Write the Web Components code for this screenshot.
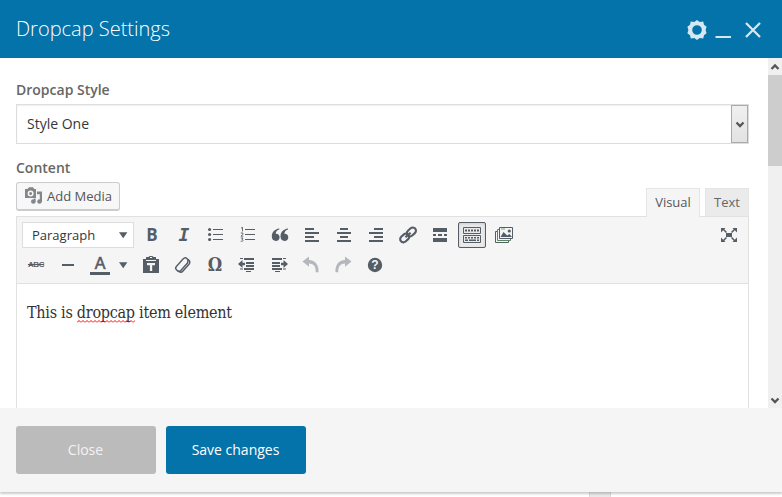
<!DOCTYPE html>
<html lang="en">
<head>
<meta charset="utf-8">
<title>Dropcap Settings</title>
<style>
html,body{margin:0;height:100%;overflow:hidden}
body{font-family:"Open Sans","Liberation Sans",sans-serif;background:#fff}
</style>
</head>
<body>
<settings-dialog></settings-dialog>
<script>
const define = (name, html) => customElements.define(name, class extends HTMLElement {
  constructor() {
    super();
    this.attachShadow({ mode: 'open' }).innerHTML = html;
  }
});

// Icons are drawn on a 20 x 20 grid.
const ICONS = {
  ul: '<g fill="currentColor"><circle cx="3.600" cy="4.500" r="1.600"/><circle cx="3.600" cy="9.500" r="1.600"/><circle cx="3.600" cy="14.500" r="1.600"/><path d="M7 4h10v1H7zM7 9h10v1H7zM7 14h10v1H7z"/></g>',
  ol: '<g fill="currentColor"><path d="M7 4h10v1H7zM7 9h10v1H7zM7 14h10v1H7z"/><path d="M3 3.2L4.5 2.300v4.200M2.800 8h2.100v1.200L3 11.2h2.300M2.800 13h2.200l-1 1.5c1.700.2 1.500 2.100-1.300 1.700" fill="none" stroke="currentColor" stroke-width=".9"/></g>',
  quote: '<g fill="currentColor"><path d="M9.300 4.600C7.200 5 5.700 6.800 5.700 8.800c2-.3 3.900 1 3.900 3.400 0 2.200-1.600 3.800-3.700 3.800-2.600 0-4.100-1.900-4.100-4.700C1.800 7.300 4.600 4.200 9.300 3.600z"/><path transform="translate(8.700)" d="M9.300 4.600C7.200 5 5.700 6.800 5.700 8.800c2-.3 3.900 1 3.900 3.400 0 2.200-1.600 3.800-3.700 3.800-2.600 0-4.100-1.900-4.100-4.700C1.800 7.300 4.600 4.200 9.300 3.600z"/></g>',
  left: '<path fill="currentColor" d="M3 3h9v2H3zM3 7h14v2H3zM3 11h9v2H3zM3 15h14v2H3z"/>',
  center: '<path fill="currentColor" d="M6 3h8v2H6zM3 7h14v2H3zM6 11h8v2H6zM3 15h14v2H3z"/>',
  right: '<path fill="currentColor" d="M8 3h9v2H8zM3 7h14v2H3zM8 11h9v2H8zM3 15h14v2H3z"/>',
  link: '<g transform="rotate(-42 10 10)" fill="none" stroke="currentColor" stroke-width="2.100"><rect x=".6" y="6.800" width="10" height="6.400" rx="3.200"/><rect x="9.600" y="6.800" width="10" height="6.400" rx="3.200"/><path d="M6.500 10h7"/></g>',
  more: '<path fill="currentColor" d="M3 3h14v4H3zM3 9h3v2H3zM8 9h4v2H8zM14 9h3v2h-3zM3 13h14v4H3z"/>',
  keys: '<g fill="none" stroke="currentColor"><path d="M1.500 2.500h17v6h-17zM1.500 10.500h17v7h-17z"/><path d="M3 5.500h14" stroke-width="2" stroke-dasharray="2 1"/><path d="M3 12.800h14" stroke-width="1.500" stroke-dasharray="2 1"/><path d="M3 15.300h3m1 0h7m1 0h2" stroke-width="1.500"/></g>',
  images: '<g fill="#f5f5f5" stroke="currentColor"><path d="M1.500 6.500h13v11h-13z"/><path d="M3.500 4.500h13v11h-13z" stroke="#548964"/><path d="M5.500 2.500h13v11h-13z"/></g><path d="M6.500 12L9.500 7l3.700 3.500 2.200-1.600 2.600 3.100H6.500z" fill="currentColor"/><circle cx="15.300" cy="6" r="1.600" fill="currentColor"/><path d="M7 4h4" stroke="#6daf85"/>',
  full: '<path fill="currentColor" d="M7 8h6v4H7zM2 3h4.500L5.300 4.200 8 6.900 6.900 8 4.200 5.300 2 7.500zM18 3v4.500l-2.200-2.200L13.100 8 12 6.900l2.700-2.700L13.500 3zM2 17v-4.500l2.200 2.200L6.900 12 8 13.100l-2.700 2.700L6.500 17zM18 17h-4.500l1.200-1.200-2.700-2.700 1.100-1.100 2.700 2.700 2.200-2.200z"/>',
  hr: '<path fill="currentColor" d="M4 9h12v2H4z"/>',
  paste: '<path fill="currentColor" fill-rule="evenodd" d="M2 4h3v2h10V4h3v14H2zM5 2h2.500C7.500.5 12.500.5 12.500 2H15v3H5zM9 2v1h2V2zM6 8v2.200h2.900V16h2.300v-5.800H14V8z"/>',
  eraser: '<g transform="rotate(-48 10 10)" fill="none" stroke="currentColor"><path d="M4.500 6h10q3 0 3 2.500t-3 3.500h-10q-2.500 0-2.500-3t2.500-3z" stroke-width="1.400"/><path d="M2.200 9.500q0 4.500 3 4.500h9.300q3 0 3-4" stroke-width="1.500"/></g>',
  outdent: '<path fill="currentColor" d="M7 3h10v2H7zM9 7h8v2H9zM9 10h8v2H9zM7 13h10v2H7zM9 16h5v1H9zM1 9l4.500-4v2.800H8v2.400H5.500V13zM3 3h3v1H3zM3 13.500h3v1H3z"/>',
  indent: '<path fill="currentColor" d="M3 3h10v2H3zM3 7h8v2H3zM3 10h8v2H3zM3 13h10v2H3zM6 16h5v1H6zM19 9l-4.500-4v2.800H12v2.400h2.500V13zM14 3h3v1h-3zM14 13.500h3v1h-3z"/>',
  undo: '<path fill="currentColor" d="M1.500 6.500L8 1.500v3.400c6.300.1 10 4.800 9.500 12.300h-2.800c.3-5.200-1.500-8.600-6.700-8.800v3.300z"/>',
  help: '<circle cx="10" cy="10" r="7.200" fill="currentColor"/>',
  gear: '<path d="M10 0l2.700 2 3.500-.5.800 3.300 2.600 2L18.600 10l1 3.200-2.600 2-.8 3.300-3.500-.5L10 20l-2.700-2-3.500.5-.8-3.300-2.600-2 1-3.200-1-3.200L3 4.800l.8-3.300 3.500.5zM10 5.200a4.800 4.800 0 100 9.600 4.800 4.800 0 000-9.600z" fill="currentColor" fill-rule="evenodd"/>',
  min: '<path d="M2.500 16h15.500v2H2.500z" fill="currentColor"/>',
  close: '<path d="M3 3l14 14M17 3L3 17" stroke="currentColor" stroke-width="2.300"/>',
  media: '<g fill="currentColor"><path fill-rule="evenodd" d="M1 3h2.500L5 1.300h4L10.300 3H12v9H1zM6.600 4.500a3 3 0 100 6 3 3 0 000-6zm0 1.500a1.500 1.500 0 110 3 1.500 1.500 0 010-3z"/><circle cx="9.300" cy="15.500" r="2.300"/><circle cx="15.500" cy="15.500" r="2.300"/><path d="M13 5.500h5v10.300h-2.200V8.300H13zM9.800 12.500h1.800v3H9.800z"/></g>',
  caret: '<path fill="currentColor" d="M6 7.200h8.400L10.200 13.200z"/>',
  up: '<path d="M6.500 12L10 8.500l3.500 3.500" fill="none" stroke="currentColor" stroke-width="2.300"/>',
  down: '<path d="M6.500 8.500L10 12l3.500-3.500" fill="none" stroke="currentColor" stroke-width="2.300"/>'
};
customElements.define('ui-icon', class extends HTMLElement {
  constructor() {
    super();
    this.attachShadow({ mode: 'open' });
  }
  connectedCallback() {
    this.shadowRoot.innerHTML = `<style>:host{display:block;width:20px;height:20px;flex:none}svg{display:block;width:100%;height:100%}</style><svg viewBox="0 0 20 20">${ICONS[this.getAttribute('name')]}</svg>`;
  }
});

define('tool-button', `<style>
:host{display:flex;position:relative;box-sizing:border-box;width:28px;height:26px;align-items:center;justify-content:center;color:#555d66;border-radius:2px}
:host([active]){border:1px solid #555d66;background:#ebebeb;box-shadow:inset 0 1px 3px #ccc}
:host([disabled]){color:#b4b8bc}
</style><slot></slot>`);

define('dialog-header', `<style>
:host{display:flex;height:58px;box-sizing:border-box;background:#0473aa;align-items:center;padding:0 19px 0 16px}
h1{font-weight:300;font-size:20px;line-height:28px;color:#fff;margin:0;flex:1;letter-spacing:0}
nav{display:flex;gap:8px;color:#d5e8f1;padding-top:2px}
</style><h1>Dropcap Settings</h1><nav><ui-icon name="gear"></ui-icon><ui-icon name="min" style="margin-left:-2px"></ui-icon><ui-icon name="close" style="margin-left:2px"></ui-icon></nav>`);

define('scroll-bar', `<style>
:host{display:flex;flex-direction:column;justify-content:space-between;width:14px;background:#f0f0f0;color:#555;overflow:hidden}
i{display:block;height:91px;background:#cdcdcd}
span{display:flex;height:17px;justify-content:center;align-items:center}
b{flex:1}
</style><span><ui-icon name="up"></ui-icon></span><i></i><b></b><span><ui-icon name="down"></ui-icon></span>`);

define('style-select', `<style>
:host{display:flex;box-sizing:border-box;height:40px;border:1px solid #ddd;box-shadow:inset 0 1px 2px #eee;font-size:14px;color:#32373c}
span{flex:1;line-height:37px;padding-left:10px}
b{display:flex;box-sizing:border-box;width:17px;border:1px solid #aaa;background:linear-gradient(#f0f0f0,#e2e2e2);align-items:center;justify-content:center;color:#555;overflow:hidden}
ui-icon{width:20px}
</style><span><slot></slot></span><b><ui-icon name="down"></ui-icon></b>`);

define('media-button', `<style>
:host{display:flex;box-sizing:border-box;width:104px;height:29px;border:1px solid #ccc;border-bottom-width:2px;border-radius:3px;background:#f7f7f7;align-items:center;font-size:13px;color:#555;padding-left:7px;white-space:nowrap}
ui-icon{color:#82878c;margin-right:3px}
</style><ui-icon name="media"></ui-icon><slot></slot>`);

define('editor-tab', `<style>
:host{display:block;box-sizing:border-box;height:28px;border:1px solid #e5e5e5;border-bottom:0;background:#ebebeb;color:#666;font-size:13px;line-height:27px;text-align:center;width:44px}
:host([active]){width:54px;height:29px;background:#f5f5f5;color:#555;margin-bottom:-1px;position:relative}
</style><slot></slot>`);

define('editor-toolbar', `<style>
:host{display:block;box-sizing:border-box;height:68px;border:1px solid #e1e1e1;background:#f5f5f5;padding:5px}
div{display:flex;gap:4px;height:26px}
div+div{margin-top:4px}
.format{display:flex;box-sizing:border-box;width:112px;background:#fff;border:1px solid #ddd;font-size:13px;line-height:25px;padding-left:9px;color:#32373c;justify-content:space-between;align-items:center}
.format ui-icon{color:#555d66}
.push{margin-left:auto}
.b{font:bold 17px/26px "Open Sans"}
.i{font:italic bold 18px/26px "DejaVu Sans Mono"}
.abc{font:bold 8px/20px "Liberation Sans";text-decoration:line-through;letter-spacing:-.4px}
.a{font:16px/18px "Liberation Sans";-webkit-text-stroke:.6px;width:20px;text-align:center;border-bottom:3px solid;height:17px;box-sizing:content-box}
.o{font:bold 18px/26px "DejaVu Serif Condensed","DejaVu Serif"}
.q{position:absolute;inset:0;text-align:center;color:#f5f5f5;font:bold 12px/26px "Liberation Sans"}
.split{width:15px}
.split ui-icon{position:relative;left:-3px}
</style>
<div><span class="format">Paragraph<ui-icon name="caret"></ui-icon></span>
<tool-button><span class="b">B</span></tool-button><tool-button><span class="i">I</span></tool-button><tool-button><ui-icon name="ul"></ui-icon></tool-button><tool-button><ui-icon name="ol"></ui-icon></tool-button><tool-button><ui-icon name="quote"></ui-icon></tool-button><tool-button><ui-icon name="left"></ui-icon></tool-button><tool-button><ui-icon name="center"></ui-icon></tool-button><tool-button><ui-icon name="right"></ui-icon></tool-button><tool-button><ui-icon name="link"></ui-icon></tool-button><tool-button><ui-icon name="more"></ui-icon></tool-button><tool-button active><ui-icon name="keys"></ui-icon></tool-button><tool-button><ui-icon name="images"></ui-icon></tool-button><tool-button class="push"><ui-icon name="full"></ui-icon></tool-button></div>
<div><tool-button><span class="abc">ABC</span></tool-button><tool-button><ui-icon name="hr"></ui-icon></tool-button><tool-button><span class="a">A</span></tool-button><tool-button class="split"><ui-icon name="caret"></ui-icon></tool-button><tool-button><ui-icon name="paste"></ui-icon></tool-button><tool-button><ui-icon name="eraser"></ui-icon></tool-button><tool-button><span class="o">Ω</span></tool-button><tool-button><ui-icon name="outdent"></ui-icon></tool-button><tool-button><ui-icon name="indent"></ui-icon></tool-button><tool-button disabled><ui-icon name="undo"></ui-icon></tool-button><tool-button disabled><ui-icon name="undo" style="transform:scaleX(-1)"></ui-icon></tool-button><tool-button><ui-icon name="help"></ui-icon><span class="q">?</span></tool-button></div>`);

define('editor-content', `<style>
:host{display:block;flex:1;border:solid #e1e1e1;border-width:0 1px;padding:15px 10px;font:16px/28px Georgia,"DejaVu Serif Condensed","DejaVu Serif",serif;color:#333;letter-spacing:-.27px}
p{margin:0;white-space:nowrap}
span{position:relative}
svg{position:absolute;left:0;bottom:-1px;width:100%;height:3px}
</style><p>This is <span>dropcap<svg><defs><pattern id="w" width="4" height="3" patternUnits="userSpaceOnUse"><path d="M0 2.500L2 .5 4 2.500" fill="none" stroke="#f00" stroke-width="1"/></pattern></defs><rect width="100%" height="3" fill="url(#w)"/></svg></span> item element</p>`);

define('action-button', `<style>
:host{display:block;width:140px;height:48px;border-radius:3px;background:#0473aa;color:#fff;font-size:14px;line-height:47px;text-align:center;box-sizing:border-box;padding-right:1px}
:host([muted]){background:#bbb;color:#f3f3f3}
</style><slot></slot>`);

define('settings-dialog', `<style>
:host{display:flex;flex-direction:column;height:497px;width:782px;overflow:hidden;background:#fff}
main{display:flex;height:350px;overflow:hidden}
section{flex:1;display:flex;flex-direction:column;padding:22px 19px 0 16px}
label{display:block;font-weight:600;font-size:14px;line-height:20px;color:#666;height:24px}
style-select{margin-bottom:14px}
.bar{display:flex;align-items:flex-end;gap:5px;height:34px}
media-button{margin:0 auto 5px 0}
footer{position:relative;display:flex;gap:10px;height:84px;box-sizing:border-box;padding:18px 16px;background:#f5f5f5;box-shadow:0 2px 2px rgba(0,0,0,.2)}
.page{width:20px;height:5px;margin-left:589px;background:#eaeaea;border:solid #ddd;border-width:0 1px}
</style>
<dialog-header></dialog-header>
<main><section>
<label>Dropcap Style</label><style-select>Style One</style-select>
<label>Content</label>
<div class="bar"><media-button>Add Media</media-button><editor-tab active>Visual</editor-tab><editor-tab>Text</editor-tab></div>
<editor-toolbar></editor-toolbar><editor-content></editor-content>
</section><scroll-bar></scroll-bar></main>
<footer><action-button muted>Close</action-button><action-button>Save changes</action-button></footer>
<div class="page"></div>`);
</script>
</body>
</html>
